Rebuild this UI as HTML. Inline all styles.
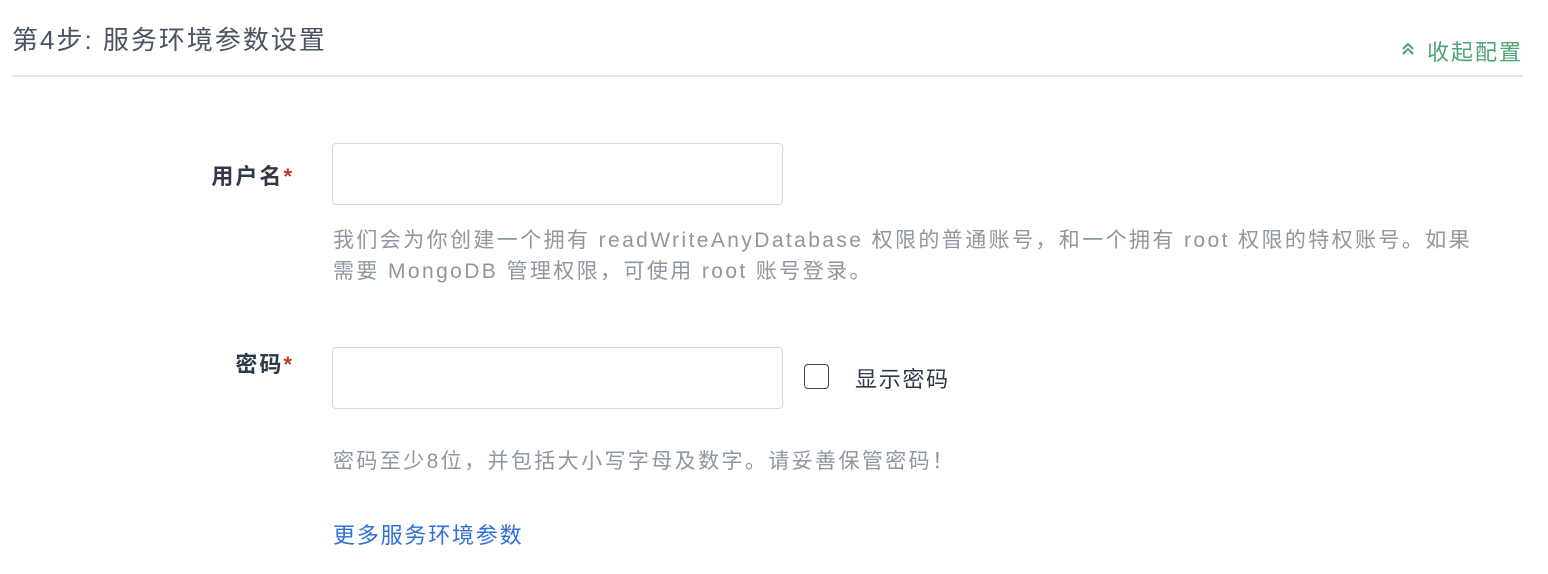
<!DOCTYPE html>
<html><head><meta charset="utf-8"><style>
body{margin:0;width:1548px;height:574px;background:#fff;font-family:"Liberation Sans","Noto Sans CJK SC",sans-serif;position:relative;overflow:hidden}
.a{position:absolute;white-space:nowrap}
.title{left:12px;top:20px;font-size:26px;color:#4a5360;letter-spacing:2px}
.line{left:12px;top:75px;width:1511px;height:2px;background:#e4e7eb}
.col{right:25px;top:35px;font-size:22px;color:#4ea574;letter-spacing:2px}
.lab{font-size:22px;font-weight:bold;color:#2f3a48;text-align:right;width:200px;letter-spacing:2px}
.lab b{color:#c0392b;letter-spacing:0}
.inp{left:332px;width:449px;height:60px;border:1.5px solid #d4d9de;border-radius:4px}
.help{left:333px;font-size:21px;color:#8d97a2;line-height:31px;letter-spacing:2.4px}
</style></head><body>
<div class="a title">第4步: 服务环境参数设置</div>
<svg class="a" style="left:1400px;top:41px" width="16" height="16" viewBox="0 0 16 16"><path d="M3 8 L8 3 L13 8 M3 13 L8 8 L13 13" fill="none" stroke="#4ea574" stroke-width="2"/></svg>
<div class="a col">收起配置</div>
<div class="a line"></div>
<div class="a lab" style="left:92px;top:159px">用户名<b>*</b></div>
<div class="a inp" style="top:143px"></div>
<div class="a help" style="top:225px">我们会为你创建一个拥有 readWriteAnyDatabase 权限的普通账号，和一个拥有 root 权限的特权账号。如果<br>需要 MongoDB 管理权限，可使用 root 账号登录。</div>
<div class="a lab" style="left:92px;top:347px">密码<b>*</b></div>
<div class="a inp" style="top:347px"></div>
<div class="a" style="left:804px;top:364px;width:23px;height:23px;border:1.5px solid #3a4450;border-radius:4px"></div>
<div class="a" style="left:855px;top:362px;font-size:22px;color:#2f3a48;letter-spacing:1.7px">显示密码</div>
<div class="a help" style="top:446px">密码至少8位，并包括大小写字母及数字。请妥善保管密码！</div>
<div class="a" style="left:333px;top:518px;font-size:22px;color:#2f6fd6;letter-spacing:1.8px">更多服务环境参数</div>
</body></html>
